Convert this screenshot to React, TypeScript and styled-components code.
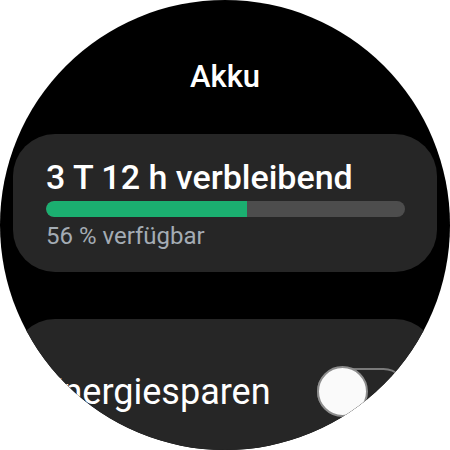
import React from "react";
import styled, { createGlobalStyle } from "styled-components";

const Global = createGlobalStyle`
  html, body { margin: 0; padding: 0; background: #ffffff; }
  body { font-family: Roboto, "Noto Sans", sans-serif; }
`;

const Screen = styled.div`
  width: 450px;
  height: 450px;
  border-radius: 50%;
  overflow: hidden;
  background: #000000;
  display: flex;
  flex-direction: column;
  align-items: stretch;
  padding-top: 59px;
  box-sizing: border-box;
`;

const Title = styled.h1`
  margin: 0;
  text-align: center;
  color: #ffffff;
  font-size: 31px;
  line-height: 36px;
  font-weight: 500;
`;

const Card = styled.section<{ $top: number; $padTop: number; $padBottom: number }>`
  margin: ${(p) => p.$top}px 13px 0;
  background: #262626;
  border-radius: 42px;
  padding: ${(p) => p.$padTop}px 32px ${(p) => p.$padBottom}px 33px;
  display: flex;
  flex-direction: column;
  flex-shrink: 0;
`;

const Headline = styled.div`
  color: #ffffff;
  font-size: 34px;
  line-height: 40px;
  font-weight: 500;
  white-space: nowrap;
`;

const Track = styled.div`
  margin-top: 4px;
  height: 16px;
  border-radius: 8px;
  background: #4d4d4d;
  overflow: hidden;
  display: flex;
`;

const Fill = styled.div`
  height: 100%;
  background: #1baf70;
  border-radius: 8px 0 0 8px;
`;

const Sub = styled.div`
  margin-top: 4px;
  color: #a4acb4;
  font-size: 24px;
  line-height: 30px;
  white-space: nowrap;
`;

const Row = styled.div`
  display: flex;
  align-items: center;
  justify-content: space-between;
  height: 51px;
`;

const Label = styled.div`
  color: #ffffff;
  font-size: 36px;
  line-height: 44px;
  white-space: nowrap;
  margin-left: -4px;
`;

const Switch = styled.div`
  position: relative;
  width: 90px;
  height: 47px;
  border-radius: 24px;
  border: 2px solid #7a7a7a;
  box-sizing: border-box;
  margin-right: -2px;
`;

const Knob = styled.div`
  position: absolute;
  left: -2px;
  top: 50%;
  width: 51px;
  height: 51px;
  margin-top: -25.5px;
  border-radius: 50%;
  background: #fafafa;
  border: 2px solid #8c8c8c;
  box-sizing: border-box;
`;

export default function App() {
  const percent = 56;
  return (
    <>
      <Global />
      <Screen>
        <Title>Akku</Title>
        <Card $top={39} $padTop={23} $padBottom={21}>
          <Headline>3 T 12 h verbleibend</Headline>
          <Track>
            <Fill style={{ width: `${percent}%` }} />
          </Track>
          <Sub>{percent} % verfügbar</Sub>
        </Card>
        <Card $top={47} $padTop={47} $padBottom={60}>
          <Row>
            <Label>Energiesparen</Label>
            <Switch>
              <Knob />
            </Switch>
          </Row>
        </Card>
      </Screen>
    </>
  );
}
